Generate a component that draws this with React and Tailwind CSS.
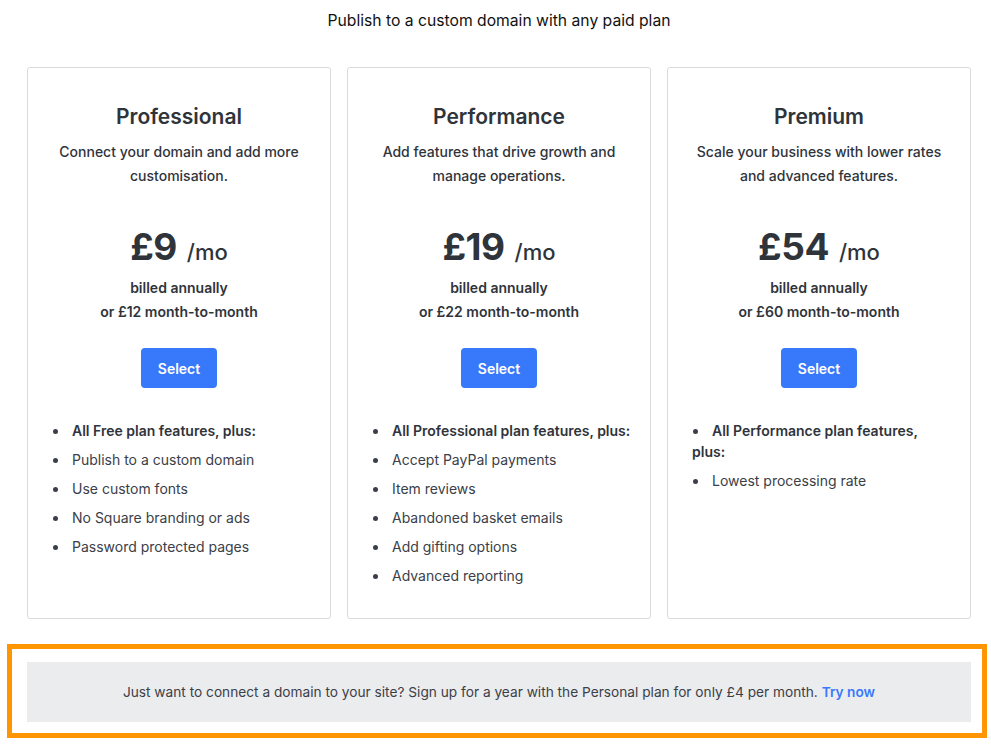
import React from "react";

const plans = [
  {
    name: "Professional",
    desc: ["Connect your domain and add more", "customisation."],
    price: "£9",
    monthly: "£12",
    lead: "All Free plan features, plus:",
    items: [
      "Publish to a custom domain",
      "Use custom fonts",
      "No Square branding or ads",
      "Password protected pages",
    ],
  },
  {
    name: "Performance",
    desc: ["Add features that drive growth and", "manage operations."],
    price: "£19",
    monthly: "£22",
    lead: "All Professional plan features, plus:",
    items: [
      "Accept PayPal payments",
      "Item reviews",
      "Abandoned basket emails",
      "Add gifting options",
      "Advanced reporting",
    ],
  },
  {
    name: "Premium",
    desc: ["Scale your business with lower rates", "and advanced features."],
    price: "£54",
    monthly: "£60",
    lead: "All Performance plan features, plus:",
    items: ["Lowest processing rate"],
  },
];

function Bullet() {
  return (
    <span className="inline-block w-[20px] align-top">
      <span className="inline-block w-[5px] h-[5px] rounded-full bg-[#3b4048] translate-y-[-2px] ml-[1px]" />
    </span>
  );
}

function Card({ plan }) {
  return (
    <div className="flex-1 border border-[#d9dadc] rounded-[3px] bg-white pt-[33px] pb-[32px]">
      <h2 className="text-center text-[21px] leading-[32px] font-semibold text-[#2f343b]">
        {plan.name}
      </h2>
      <p className="mt-[7px] text-center text-[14px] leading-[24px] font-medium text-[#2f343b]">
        {plan.desc[0]}
        <br />
        {plan.desc[1]}
      </p>
      <div className="mt-[35px] mb-[5px] flex items-baseline justify-center h-[48px] text-[#2f343b]">
        <span className="text-[37px] leading-[48px] font-bold tracking-[-0.5px]">{plan.price}</span>
        <span className="ml-[10px] text-[22px] font-medium">/mo</span>
      </div>
      <p className="text-center text-[14px] leading-[24px] font-semibold text-[#2f343b]">
        billed annually
        <br />
        or {plan.monthly} month-to-month
      </p>
      <div className="mt-[24px] flex justify-center">
        <button className="w-[76px] h-[40px] rounded-[4px] bg-[#3878fb] text-white text-[14px] font-semibold">
          Select
        </button>
      </div>
      <ul className="mt-[32px] pl-[24px] pr-[18px] flex flex-col gap-[8px] text-[14px] leading-[21px] text-[#3b4048]">
        <li className="font-semibold text-[#2f343b]">
          <Bullet />
          {plan.lead}
        </li>
        {plan.items.map((it) => (
          <li key={it}>
            <Bullet />
            {it}
          </li>
        ))}
      </ul>
    </div>
  );
}

export default function App() {
  return (
    <div
      className="w-[991px] min-h-[754px] bg-white pt-[9px]"
      style={{ fontFamily: "Inter, 'Noto Sans', sans-serif" }}
    >
      <h1 className="text-center text-[15.7px] leading-[24px] text-[#111] pl-[7px]">
        Publish to a custom domain with any paid plan
      </h1>
      <div className="mt-[34px] pl-[27px] pr-[20px] flex gap-[16px] items-stretch">
        {plans.map((p) => (
          <Card key={p.name} plan={p} />
        ))}
      </div>
      <div className="mt-[25px] ml-[7px] w-[980px] border-[5px] border-[#ff9500] pt-[13px] pl-[15px] pr-[11px] pb-[11px]">
        <div className="h-[60px] bg-[#ebecee] flex items-center justify-center text-[13.7px] text-[#3b4048]">
          <span>
            Just want to connect a domain to your site? Sign up for a year with the Personal plan for only £4 per month.{" "}
            <a className="text-[#3878fb] font-semibold">Try now</a>
          </span>
        </div>
      </div>
    </div>
  );
}
